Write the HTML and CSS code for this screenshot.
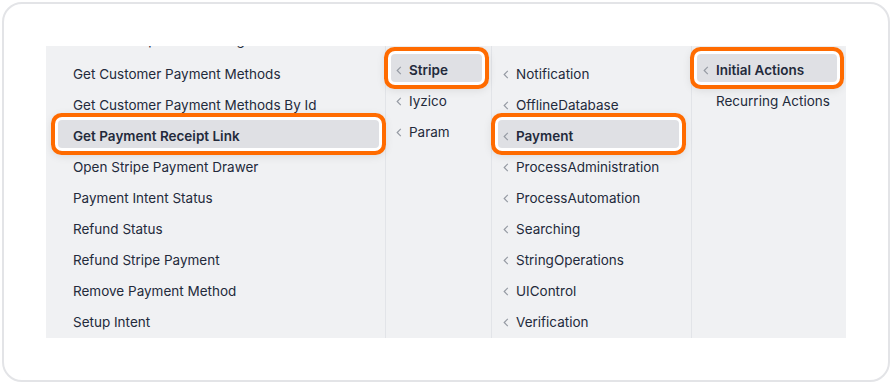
FILE: index.html
```html
<!DOCTYPE html>
<html lang="en">
<head>
    <meta charset="UTF-8">
    <meta name="viewport" content="width=device-width, initial-scale=1.0">
    <title>Action Browser</title>
    <link rel="stylesheet" href="styles.css">
</head>
<body>
    <div class="card">
        <div class="panel">
            <div class="col col-actions">
                <ul class="list">
                    <li class="item scrolled-off">Create Setup Intent Settings</li>
                    <li class="item">Get Customer Payment Methods</li>
                    <li class="item">Get Customer Payment Methods By Id</li>
                    <li class="item selected">Get Payment Receipt Link</li>
                    <li class="item">Open Stripe Payment Drawer</li>
                    <li class="item">Payment Intent Status</li>
                    <li class="item">Refund Status</li>
                    <li class="item">Refund Stripe Payment</li>
                    <li class="item">Remove Payment Method</li>
                    <li class="item">Setup Intent</li>
                </ul>
            </div>
            <div class="col col-providers">
                <ul class="list">
                    <li class="item selected"><svg class="chev" viewBox="0 0 6 10"><path d="M5 1 L1 5 L5 9"/></svg>Stripe</li>
                    <li class="item"><svg class="chev" viewBox="0 0 6 10"><path d="M5 1 L1 5 L5 9"/></svg>Iyzico</li>
                    <li class="item"><svg class="chev" viewBox="0 0 6 10"><path d="M5 1 L1 5 L5 9"/></svg>Param</li>
                </ul>
            </div>
            <div class="col col-categories">
                <ul class="list">
                    <li class="item"><svg class="chev" viewBox="0 0 6 10"><path d="M5 1 L1 5 L5 9"/></svg>Notification</li>
                    <li class="item"><svg class="chev" viewBox="0 0 6 10"><path d="M5 1 L1 5 L5 9"/></svg>OfflineDatabase</li>
                    <li class="item selected"><svg class="chev" viewBox="0 0 6 10"><path d="M5 1 L1 5 L5 9"/></svg>Payment</li>
                    <li class="item"><svg class="chev" viewBox="0 0 6 10"><path d="M5 1 L1 5 L5 9"/></svg>ProcessAdministration</li>
                    <li class="item"><svg class="chev" viewBox="0 0 6 10"><path d="M5 1 L1 5 L5 9"/></svg>ProcessAutomation</li>
                    <li class="item"><svg class="chev" viewBox="0 0 6 10"><path d="M5 1 L1 5 L5 9"/></svg>Searching</li>
                    <li class="item"><svg class="chev" viewBox="0 0 6 10"><path d="M5 1 L1 5 L5 9"/></svg>StringOperations</li>
                    <li class="item"><svg class="chev" viewBox="0 0 6 10"><path d="M5 1 L1 5 L5 9"/></svg>UIControl</li>
                    <li class="item"><svg class="chev" viewBox="0 0 6 10"><path d="M5 1 L1 5 L5 9"/></svg>Verification</li>
                </ul>
            </div>
            <div class="col col-groups">
                <ul class="list">
                    <li class="item selected"><svg class="chev" viewBox="0 0 6 10"><path d="M5 1 L1 5 L5 9"/></svg>Initial Actions</li>
                    <li class="item"><span class="chev-space"></span>Recurring Actions</li>
                </ul>
            </div>
        </div>
    </div>
</body>
</html>
```

FILE: styles.css
```css
body {
    margin: 0;
    padding: 2px;
    background-color: #ffffff;
    font-family: Inter, "Noto Sans", sans-serif;
    font-size: 13.5px;
    color: #232a3b;
}
.card {
    box-sizing: border-box;
    width: 888px;
    height: 380px;
    padding: 42px;
    border: 2px solid #e3e4e7;
    border-radius: 20px;
    background-color: #ffffff;
}
.panel {
    display: grid;
    grid-template-columns: 339px 106px 200px 155px;
    height: 292px;
    background-color: #f0f1f3;
    overflow: hidden;
}
.col {
    box-sizing: border-box;
    padding-top: 8px;
}
.col + .col {
    border-left: 1px solid #e2e4e8;
}
.list {
    list-style-type: none;
    margin: 0;
    padding: 0;
}
.item {
    box-sizing: border-box;
    display: flex;
    align-items: center;
    height: 28px;
    margin-bottom: 3px;
    padding-top: 4px;
    padding-left: 5px;
    border-radius: 4px;
    white-space: nowrap;
}
.item.scrolled-off {
    margin-bottom: 6px;
}
.item.selected {
    position: relative;
    z-index: 1;
    font-weight: 600;
    background-color: #dfe0e4;
    box-shadow: 0 0 0 3px #ffffff, 0 0 0 7px #ff6b00, 0 2px 10px 6px rgba(0, 0, 0, 0.10);
}
.chev {
    width: 6px;
    height: 9px;
    margin-right: 7px;
    flex-shrink: 0;
    fill: none;
    stroke: #959aa3;
    stroke-width: 1.3;
}
.chev-space {
    width: 6px;
    margin-right: 7px;
    flex-shrink: 0;
}

.col-actions {
    padding: 0 6px 0 12px;
}
.col-actions .list {
    margin-top: -22px;
}
.col-actions .item {
    padding-left: 15px;
}
.col-providers {
    padding-left: 5px;
    padding-right: 9px;
}
.col-categories {
    padding-top: 12px;
    padding-left: 6px;
    padding-right: 12px;
}
.col-groups {
    padding-left: 5px;
    padding-right: 9px;
}
.col-groups .item {
    padding-left: 6px;
}
```
